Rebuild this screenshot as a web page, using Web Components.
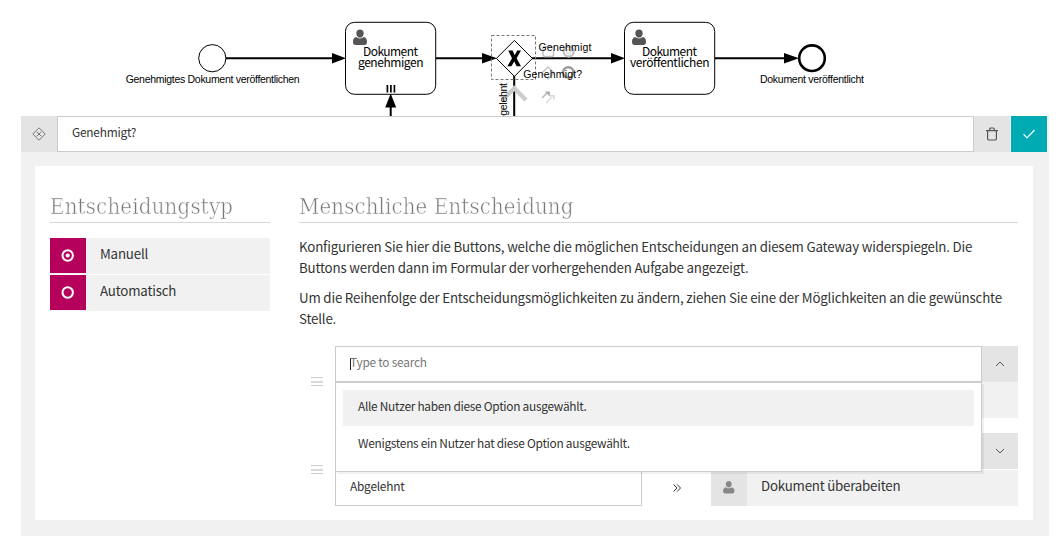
<!DOCTYPE html>
<html lang="de">
<head>
<meta charset="utf-8">
<title>Prozess-Editor</title>
<style>
body{margin:0;background:#fff;color:#333;font-family:"Noto Sans CJK SC","Noto Sans",sans-serif}
</style>
</head>
<body>
<process-editor></process-editor>
<script>
const define = (name, html) => customElements.define(name, class extends HTMLElement {
  constructor() {
    super();
    this.attachShadow({mode: 'open'}).innerHTML = html;
  }
});
const user = 'M7 0C4.7 0 3.3 1.7 3.3 3.8C3.3 5.2 3.9 6.4 4.8 7.2C5.6 8.4 8.4 8.4 9.2 7.2C10.1 6.4 10.7 5.2 10.7 3.8C10.7 1.7 9.3 0 7 0ZM3.4 7.6C1.2 8 0 9.6 0 12.2C0 14.6 .9 15.5 2.6 15.5H11.4C13.1 15.5 14 14.6 14 12.2C14 9.6 12.8 8 10.6 7.6C9.5 9.3 4.5 9.3 3.4 7.6Z';

define('flow-diagram', `
<style>
:host{display:block;height:116px;overflow:hidden}
svg{display:block}
.l{font:10.5px "Liberation Sans",Arial,sans-serif;fill:#000}
.t{font:12px "Noto Sans CJK SC",sans-serif;fill:#000}
</style>
<svg width="1056" height="116" fill="none" stroke="#000">
  <g stroke-width="2"><path d="M226 58.3H335M436 58.3H484M532 58.3H613M715 58.3H786M514.2 76V116M390.7 116V104"/></g>
  <g fill="#000" stroke="none">
    <path d="M332 53L346 58.3L332 63.6ZM482 53L497 58.3L482 63.6ZM611 53L625 58.3L611 63.6ZM784 53L799 58.3L784 63.6ZM385.2 107.5L390.7 93.5L396.2 107.5Z"/>
  </g>
  <circle cx="212.3" cy="58.2" r="13.6"/>
  <circle cx="812" cy="58.2" r="12.8" stroke-width="2.6"/>
  <rect x="345.5" y="22.3" width="90.2" height="72" rx="9" fill="#fff"/>
  <rect x="624.5" y="22.3" width="90.2" height="72" rx="9" fill="#fff"/>
  <path d="M387.4 85V92.5M390.9 85V92.5M394.4 85V92.5" stroke-width="1.7"/>
  <g fill="#555" stroke="none"><path transform="translate(353 29.5)" d="${user}"/><path transform="translate(632 29.5)" d="${user}"/></g>
  <path d="M514.4 40.4L532.4 58.4L514.4 76.4L496.4 58.4Z" fill="#fff"/>
  <path d="M508.2 50.5H512.6L514.7 55.2L517.2 50.5H521L516.6 58.3L521 66.3H516.6L514.2 61.6L511.4 66.3H507.4L512 58.3Z" fill="#000" stroke="none"/>
  <rect x="491.5" y="35.5" width="44" height="44" stroke="#777" stroke-dasharray="3 2"/>
  <g stroke="#c5c5c5" stroke-width="1.5">
    <path d="M502.5 100L514.3 88.2L526 100" stroke="#ccc" stroke-width="4.3"/>
    <rect x="543" y="46.5" width="10.5" height="10" rx="2"/>
    <circle cx="568.7" cy="51.4" r="5" stroke-width="2.5"/><circle cx="568.7" cy="51.4" r="2" stroke="#ddd"/>
    <path d="M548 67L554 73L548 79L542 73Z"/>
    <circle cx="568.3" cy="72.4" r="5.2" stroke="#999" stroke-width="2.4"/>
    <path d="M542 98L547 93" stroke="#bbb" stroke-width="1.6"/>
    <path d="M544.8 91.5H549.8V96.5Z" fill="#aaa" stroke="none"/>
    <path d="M546.5 102.5L552 97" stroke="#bbb" stroke-width="1.4" stroke-dasharray="1.5 1"/>
    <path d="M550 95.8H554V99.8" stroke="#ccc" stroke-width="1.2"/>
  </g>
  <g stroke="none">
    <text class="l" x="125.7" y="83" textLength="174">Genehmigtes Dokument veröffentlichen</text>
    <text class="l" x="760" y="83" textLength="104">Dokument veröffentlicht</text>
    <text class="l" x="538.5" y="51" textLength="53">Genehmigt</text>
    <text class="l" x="523.2" y="78" textLength="59">Genehmigt?</text>
    <text class="l" transform="translate(507.3 128) rotate(-90)" textLength="45">Abgelehnt</text>
    <text class="t"><tspan x="363" y="56" textLength="55">Dokument</tspan><tspan x="358" y="67" textLength="65.5">genehmigen</tspan></text>
    <text class="t"><tspan x="642" y="56" textLength="55">Dokument</tspan><tspan x="630" y="67" textLength="79.5">veröffentlichen</tspan></text>
  </g>
</svg>`);

define('icon-tile', `
<style>:host{display:flex;box-sizing:border-box;width:36px;height:36px;padding-bottom:1px;flex:none;align-items:center;justify-content:center;background:#e4e4e4}</style><slot></slot>`);

define('text-box', `
<style>:host{display:flex;box-sizing:border-box;height:36px;border:1px solid #ccc;background:#fff;padding:0 14px;font-size:11.9px;letter-spacing:-.24px;line-height:30px;white-space:pre}</style><slot></slot>`);

define('section-title', `
<style>:host{display:block;box-sizing:border-box;height:39px;border-bottom:1px solid #d6d6d6;white-space:nowrap;color:#777;font:22px/46px "DejaVu Serif Condensed","DejaVu Serif",serif;font-stretch:condensed;-webkit-text-stroke:.5px #fff}
span{display:inline-block;letter-spacing:var(--ls,0);opacity:.99;will-change:transform}</style><span><slot></slot></span>`);

define('radio-row', `
<style>:host{display:flex;height:36px;background:#f1f1f1;font-size:13.3px;letter-spacing:-.19px;line-height:31px}
div{width:36px;height:35px;background:#b5005c;margin-right:14px;display:flex;align-items:center;justify-content:center}
circle.d{display:none}:host([checked]) circle.d{display:block}</style>
<div><svg width="14" height="14"><circle cx="6.7" cy="6.5" r="5.2" fill="none" stroke="#fff" stroke-width="2"/><circle class="d" cx="6.7" cy="6.5" r="2.1" fill="#fff"/></svg></div><slot></slot>`);

define('drag-handle', `
<style>:host{display:block;width:12px;height:9px}svg{display:block}</style>
<svg width="12" height="9" shape-rendering="crispEdges"><path d="M0 .5H12M0 8.5H12" stroke="#ccc"/><path d="M0 4.5H12" stroke="#d8d8d8" stroke-width="2"/></svg>`);

define('option-list', `
<style>:host{display:block;box-sizing:border-box;height:90px;border:1px solid #ccc;background:#fff;padding:7px;box-shadow:2px 2px 0 rgba(0,0,0,.055);font-size:11.9px;letter-spacing:-.29px;line-height:32px}
::slotted(div){height:36px;margin-bottom:1px;padding-left:15px}::slotted(.on){background:#f1f1f1}</style><slot></slot>`);

define('decision-panel', `
<style>
:host{display:block;width:1028px;height:420px;margin-left:21px;background:#f1f1f1}
header{display:flex;height:36px;width:1026px}
header text-box{flex:1}
.ok{background:#00abb4;margin-left:1px}
main{display:grid;grid-template-columns:220px 719px;column-gap:29px;margin:14px 16px 0 14px;padding:18px 15px 0;height:336px;background:#fff}
.types{display:grid;gap:1px;margin-top:15px}
.copy{margin-top:13px;font-size:13.3px;letter-spacing:-.18px;line-height:21px}
p{margin:0 0 9px}
p span{display:block;white-space:nowrap}
.rows{display:grid;gap:15px;margin-top:17px}
.row{display:grid;grid-template-columns:36px 1fr;align-items:center;height:72px}
.row drag-handle{margin-left:12px;margin-bottom:1px}
.body{position:relative}
.line{display:flex}
.line text-box.f{flex:1}
.half{width:307px}
.arrow{width:69px;display:flex;align-items:center;justify-content:center;padding-bottom:1px;box-sizing:border-box}
.task{flex:1;background:#f1f1f1;padding-left:14px;font-size:13.3px;letter-spacing:-.22px;line-height:31px}
option-list{position:absolute;z-index:2;top:36px;left:0;width:647px}
.ph{color:#777}
.caret{width:1px;height:12px;background:#222;align-self:center;margin-right:-1px}
.second{height:73px}
</style>
<header>
  <icon-tile><svg width="14" height="14" viewBox="0 0 14 14" fill="none" stroke="#777"><path d="M7 .8L13.2 7L7 13.2L.8 7ZM4.8 4.8L9.2 9.2M9.2 4.8L4.8 9.2"/></svg></icon-tile>
  <text-box>Genehmigt?</text-box>
  <icon-tile><svg width="12" height="14" viewBox="0 0 12 14" fill="none" stroke="#555" stroke-width="1.2"><path d="M0 3.6H12M1.6 3.6V11.8Q1.6 13 2.8 13H9.2Q10.4 13 10.4 11.8V3.6M3.8 3.4V2Q3.8 1 4.8 1H7.2Q8.2 1 8.2 2V3.4"/></svg></icon-tile>
  <icon-tile class="ok"><svg width="12" height="10" fill="none" stroke="#fff" stroke-width="1.2"><path d="M.5 5.2L4 8.8L11.5 1"/></svg></icon-tile>
</header>
<main>
  <section>
    <section-title style="--ls:.2px">Entscheidungstyp</section-title>
    <div class="types"><radio-row checked>Manuell</radio-row><radio-row>Automatisch</radio-row></div>
  </section>
  <section>
    <section-title style="--ls:.14px">Menschliche Entscheidung</section-title>
    <div class="copy">
      <p><span>Konfigurieren Sie hier die Buttons, welche die möglichen Entscheidungen an diesem Gateway widerspiegeln. Die</span><span>Buttons werden dann im Formular der vorhergehenden Aufgabe angezeigt.</span></p>
      <p><span>Um die Reihenfolge der Entscheidungsmöglichkeiten zu ändern, ziehen Sie eine der Möglichkeiten an die gewünschte</span><span>Stelle.</span></p>
    </div>
    <div class="rows">
      <div class="row"><drag-handle></drag-handle>
        <div class="body">
          <div class="line"><text-box class="f"><span class="caret"></span><span class="ph">Type to search</span></text-box>
            <icon-tile><svg width="10" height="6" fill="none" stroke="#555"><path d="M1 5L5 1L9 5"/></svg></icon-tile></div>
          <div class="line" style="height:36px;background:#f1f1f1"></div>
          <option-list><div class="on">Alle Nutzer haben diese Option ausgewählt.</div><div>Wenigstens ein Nutzer hat diese Option ausgewählt.</div></option-list>
        </div>
      </div>
      <div class="row second"><drag-handle></drag-handle>
        <div class="body">
          <div class="line"><text-box class="f"></text-box>
            <icon-tile><svg width="10" height="6" fill="none" stroke="#555"><path d="M1 1L5 5L9 1"/></svg></icon-tile></div>
          <div class="line" style="margin-top:1px"><text-box class="half">Abgelehnt</text-box>
            <div class="arrow"><svg width="8" height="8" fill="none" stroke="#333"><path d="M.5 .5L4 4L.5 7.5M4 .5L7.5 4L4 7.5"/></svg></div>
            <icon-tile><svg width="11.5" height="12.5" viewBox="0 0 14 15.5"><path fill="#888" d="${user}"/></svg></icon-tile>
            <div class="task">Dokument überabeiten</div></div>
        </div>
      </div>
    </div>
  </section>
</main>`);

define('process-editor', `<style>:host{display:block;height:541px;overflow:hidden}</style><flow-diagram></flow-diagram><decision-panel></decision-panel>`);
</script>
</body>
</html>
